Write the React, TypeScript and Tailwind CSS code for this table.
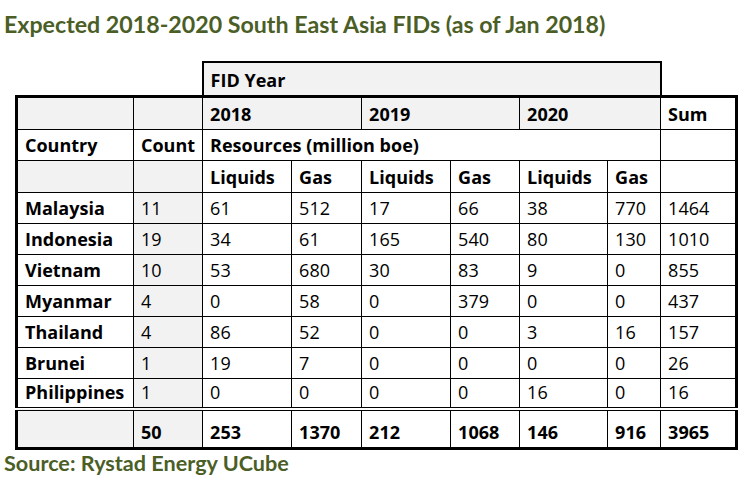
import React from "react";

const rows: [string, number, number, number, number, number, number, number, number][] = [
  ["Malaysia", 11, 61, 512, 17, 66, 38, 770, 1464],
  ["Indonesia", 19, 34, 61, 165, 540, 80, 130, 1010],
  ["Vietnam", 10, 53, 680, 30, 83, 9, 0, 855],
  ["Myanmar", 4, 0, 58, 0, 379, 0, 0, 437],
  ["Thailand", 4, 86, 52, 0, 0, 3, 16, 157],
  ["Brunei", 1, 19, 7, 0, 0, 0, 0, 26],
  ["Philippines", 1, 0, 0, 0, 0, 16, 0, 16],
];

const base =
  "border border-black px-[7px] pb-[5px] pt-0 align-bottom text-left leading-[20px] whitespace-nowrap";
const tot = base + " border-b-[3px] border-t-4 [border-top-style:double]";

export default function App() {
  return (
    <div
      className="w-[750px] h-[486px] bg-white overflow-hidden text-black"
      style={{ fontFamily: "'Open Sans', 'Noto Sans', sans-serif" }}
    >
      <div
        className="pl-[4px] pt-[11px] text-[23.2px] leading-[27px] font-bold text-[#4b5e26]"
        style={{ fontFamily: "Lato, sans-serif" }}
      >
        Expected 2018-2020 South East Asia FIDs (as of Jan 2018)
      </div>
      <table className="ml-[15px] mt-[23px] table-fixed border-collapse text-[18px]">
        <colgroup>
          <col className="w-[117px]" />
          <col className="w-[69px]" />
          <col className="w-[89px]" />
          <col className="w-[70px]" />
          <col className="w-[89px]" />
          <col className="w-[69px]" />
          <col className="w-[88px]" />
          <col className="w-[53px]" />
          <col className="w-[76px]" />
        </colgroup>
        <tbody>
          <tr className="h-[34px]">
            <td colSpan={2} className="border-0 p-0"></td>
            <td
              colSpan={6}
              className={base + " bg-[#f2f2f2] font-bold border-t-2 border-l-2 border-r-2"}
            >
              FID Year
            </td>
            <td className="border-0 p-0"></td>
          </tr>
          <tr className="h-[33px] font-bold">
            <td className={base + " bg-[#f2f2f2] border-t-[3px] border-l-[3px]"}></td>
            <td className={base + " bg-[#f2f2f2] border-t-[3px]"}></td>
            <td colSpan={2} className={base + " bg-[#f2f2f2] border-t-[3px]"}>
              2018
            </td>
            <td colSpan={2} className={base + " bg-[#f2f2f2] border-t-[3px]"}>
              2019
            </td>
            <td colSpan={2} className={base + " bg-[#f2f2f2] border-t-[3px]"}>
              2020
            </td>
            <td className={base + " border-t-[3px] border-r-[3px]"}>Sum</td>
          </tr>
          <tr className="h-[31px] font-bold">
            <td className={base + " border-l-[3px]"}>Country</td>
            <td className={base}>Count</td>
            <td colSpan={6} className={base}>
              Resources (million boe)
            </td>
            <td className={base + " border-r-[3px]"}></td>
          </tr>
          <tr className="h-[32px] font-bold">
            <td className={base + " bg-[#f2f2f2] border-l-[3px]"}></td>
            <td className={base + " bg-[#f2f2f2]"}></td>
            <td className={base}>Liquids</td>
            <td className={base}>Gas</td>
            <td className={base}>Liquids</td>
            <td className={base}>Gas</td>
            <td className={base}>Liquids</td>
            <td className={base}>Gas</td>
            <td className={base + " border-r-[3px]"}></td>
          </tr>
          {rows.map((r) => (
            <tr key={r[0]} className="h-[31px]">
              <td className={base + " font-bold border-l-[3px]"}>{r[0]}</td>
              <td className={base + " bg-[#f2f2f2]"}>{r[1]}</td>
              <td className={base}>{r[2]}</td>
              <td className={base}>{r[3]}</td>
              <td className={base}>{r[4]}</td>
              <td className={base}>{r[5]}</td>
              <td className={base}>{r[6]}</td>
              <td className={base}>{r[7]}</td>
              <td className={base + " border-r-[3px]"}>{r[8]}</td>
            </tr>
          ))}
          <tr className="h-[39px] font-bold">
            <td className={tot + " bg-[#f2f2f2] border-l-[3px]"}></td>
            <td className={tot + " bg-[#f2f2f2]"}>50</td>
            <td className={tot}>253</td>
            <td className={tot}>1370</td>
            <td className={tot}>212</td>
            <td className={tot}>1068</td>
            <td className={tot}>146</td>
            <td className={tot}>916</td>
            <td className={tot + " border-r-[3px]"}>3965</td>
          </tr>
        </tbody>
      </table>
      <div
        className="pl-[4px] pt-[1px] text-[21.6px] leading-[24px] font-bold text-[#4b5e26]"
        style={{ fontFamily: "Lato, sans-serif" }}
      >
        Source: Rystad Energy UCube
      </div>
    </div>
  );
}
